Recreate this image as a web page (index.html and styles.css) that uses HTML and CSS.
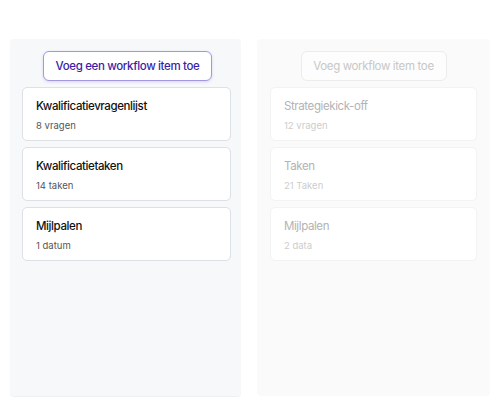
FILE: index.html
```html
<!DOCTYPE html>
<html>
<head>
<meta charset="utf-8">
<link rel="stylesheet" href="styles.css">
</head>
<body>
<div class="board">
  <section class="column active">
    <button class="add add-active">Voeg een workflow item toe</button>
    <div class="card">
      <div class="title">Kwalificatievragenlijst</div>
      <div class="meta">8 vragen</div>
    </div>
    <div class="card">
      <div class="title">Kwalificatietaken</div>
      <div class="meta">14 taken</div>
    </div>
    <div class="card">
      <div class="title">Mijlpalen</div>
      <div class="meta">1 datum</div>
    </div>
  </section>
  <section class="column faded">
    <button class="add add-faded">Voeg workflow item toe</button>
    <div class="card">
      <div class="title">Strategiekick-off</div>
      <div class="meta">12 vragen</div>
    </div>
    <div class="card">
      <div class="title">Taken</div>
      <div class="meta">21 Taken</div>
    </div>
    <div class="card">
      <div class="title">Mijlpalen</div>
      <div class="meta">2 data</div>
    </div>
  </section>
</div>
</body>
</html>
```

FILE: styles.css
```css
* { box-sizing: border-box; }
html, body { margin: 0; padding: 0; background: #fff; }
body {
  font-family: Inter, "Noto Sans", sans-serif;
  width: 500px;
  height: 417px;
}
.board {
  display: grid;
  grid-template-columns: 231px 233px;
  column-gap: 16px;
  padding: 39px 10px 0 10px;
}
.column {
  height: 357px;
  display: flex;
  flex-direction: column;
  align-items: stretch;
  gap: 6px;
  padding: 12px 12px 0 12px;
  border-radius: 4px;
}
.column.active {
  background: #f7f8fa;
  padding-right: 10px;
  box-shadow: 0 1px 0 #eef1f4;
}
.column.faded {
  background: #fafafa;
  padding: 12px 13px 0 13px;
}
.add {
  align-self: center;
  height: 30px;
  padding: 0;
  white-space: nowrap;
  font-family: inherit;
  font-size: 11.5px;
  letter-spacing: -0.35px;
  font-weight: 500;
  border-radius: 6px;
  cursor: pointer;
}
.add-active {
  width: 169px;
  margin-left: 2px;
  background: #fff;
  color: #3a1ea6;
  border: 1px solid #a497e0;
  box-shadow: 0 1px 3px rgba(80, 60, 180, 0.18);
}
.add-faded {
  width: 146px;
  background: #fdfdfd;
  color: #c8c8c8;
  font-weight: 400;
  border: 1px solid #ececec;
}
.card {
  height: 54px;
  flex: none;
  background: #fff;
  border-radius: 5px;
  padding: 10px 13px 0 13px;
}
.active .card {
  border: 1px solid #dde1e6;
}
.faded .card {
  border: 1px solid #f3f3f3;
}
.title {
  font-size: 11.5px;
  letter-spacing: -0.4px;
  font-weight: 500;
  line-height: 16px;
  color: #111;
}
.meta {
  margin-top: 5px;
  font-size: 9.5px;
  line-height: 13px;
  color: #555;
}
.faded .title { color: #b3b3b3; font-weight: 400; }
.faded .meta { color: #cdcdcd; }
```
